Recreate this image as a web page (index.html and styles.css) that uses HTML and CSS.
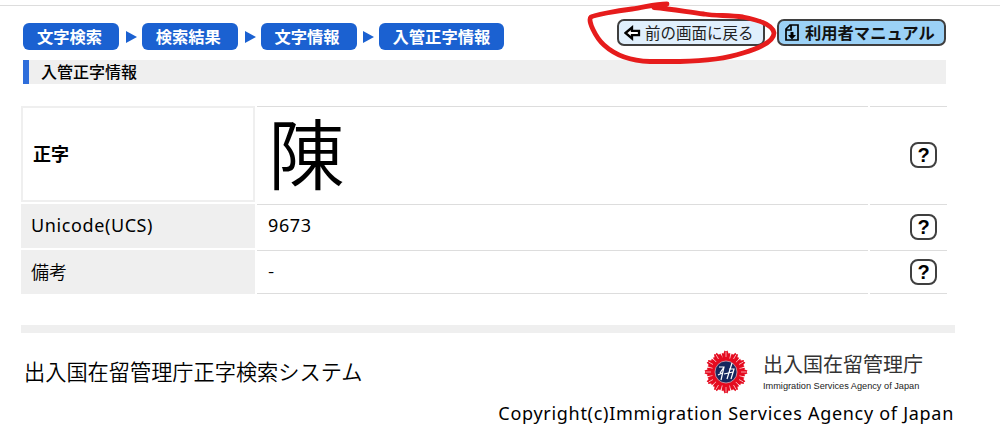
FILE: index.html
```
<!DOCTYPE html>
<html lang="ja">
<head>
<meta charset="utf-8">
<title>入管正字情報</title>
<link rel="stylesheet" href="styles.css">
</head>
<body>
<div class="page">
  <header class="topbar">
    <nav class="crumbs">
      <span class="crumb">文字検索</span><i class="arrow"></i>
      <span class="crumb">検索結果</span><i class="arrow"></i>
      <span class="crumb">文字情報</span><i class="arrow"></i>
      <span class="crumb crumb-wide">入管正字情報</span>
    </nav>
    <div class="actions">
      <span class="button back">
        <svg class="back-icon" width="17" height="16" viewBox="0 0 17 16"><path d="M1.5 8 8 2.500v3.400h7v4.200H8V13.500Z" fill="#fff" stroke="#000" stroke-width="2.300"/></svg>
        <span class="button-text">前の画面に戻る</span>
      </span>
      <span class="button manual">
        <svg class="manual-icon" width="14" height="17" viewBox="0 0 14 17"><path d="M5 1h8v15H1V5ZM6 1v5H1" fill="none" stroke="#000" stroke-width="1.7"/><path d="M5.500 8h3v3h2.500L7 15.500 3 11h2.500Z"/></svg>
        <span class="button-text">利用者マニュアル</span>
      </span>
    </div>
  </header>
  <h1 class="title">入管正字情報</h1>
  <main class="table">
    <div class="label label-main">正字</div><div class="value glyph"><span>陳</span></div><div class="help"><span class="question">?</span></div>
    <div class="label"><span class="latin">Unicode(UCS)</span></div><div class="value"><span class="latin">9673</span></div><div class="help"><span class="question">?</span></div>
    <div class="label">備考</div><div class="value last">-</div><div class="help last"><span class="question">?</span></div>
  </main>
  <footer class="footer">
    <div class="footer-row">
      <div class="system">出入国在留管理庁正字検索システム</div>
      <div class="agency">
        <svg class="emblem" width="44" height="44" viewBox="-22 -22 44 44">
          <defs>
            <g id="ray"><path d="M-4.500-10-4.300-19-2.500-18.500-1.500-21.500 0-20.500 1.500-21.500 2.500-18.500 4.300-19 4.500-10Z" fill="#e50b20"/><path d="M-5-19.500-3.500-13.500M0-20 0-15" stroke="#fff" stroke-width=".6"/></g>
          </defs>
          <circle r="15" fill="#e50b20"/>
          <use href="#ray"/><use href="#ray" transform="rotate(30)"/><use href="#ray" transform="rotate(60)"/><use href="#ray" transform="rotate(90)"/><use href="#ray" transform="rotate(120)"/><use href="#ray" transform="rotate(150)"/><use href="#ray" transform="rotate(180)"/><use href="#ray" transform="rotate(210)"/><use href="#ray" transform="rotate(240)"/><use href="#ray" transform="rotate(270)"/><use href="#ray" transform="rotate(300)"/><use href="#ray" transform="rotate(330)"/>
          <circle r="11" fill="#15275e" stroke="#d9a7b0" stroke-width=".8"/>
          <path d="M-7-5h5L-5 8M-2-5-6 1M-2 2l9-2M6-9 1 7M3-3h5L5 7M-8 3l4-2" fill="none" stroke="#fff" stroke-width="1.2"/>
        </svg>
        <div class="agency-text">
          <div class="agency-ja">出入国在留管理庁</div>
          <div class="agency-en">Immigration Services Agency of Japan</div>
        </div>
      </div>
    </div>
    <div class="copyright">Copyright(c)Immigration Services Agency of Japan</div>
  </footer>
</div>
<svg class="annotation" width="200" height="80" viewBox="580 0 200 80"><path d="M667 4C655 4 646 7 632 9C616 11 594 15 591 17C587 20 596 38 604 45C616 56 632 61 650 61.500H680C705 61 728 58 743 53C757 49 774 42 774 33C773 25 759 20 743 17C727 15 716 16 704 14C687 12 673 9 654 7.500" fill="none" stroke="#e61c1c" stroke-width="4.800" stroke-linecap="round" stroke-linejoin="round"/></svg>
</body>
</html>
```
FILE: styles.css
```
* { box-sizing: border-box; }
body {
  margin: 0;
  background: #fff;
  color: #000;
  font-family: "Noto Sans CJK JP", sans-serif;
}
.page {
  height: 441px;
  padding-top: 5px;
  overflow: hidden;
}
.topbar {
  display: flex;
  justify-content: space-between;
  height: 55px;
  padding: 13px 54px 0 23px;
  border-top: 1px solid #ddd;
}
.crumbs {
  display: flex;
  align-items: center;
  height: 27px;
  margin-top: 4px;
}
.crumb {
  width: 96px;
  height: 27px;
  padding-right: 3px;
  border-radius: 6px;
  background: #1b61d1;
  color: #fff;
  font-size: 16.3px;
  font-weight: 700;
  line-height: 26px;
  text-align: center;
  white-space: nowrap;
}
.crumb-wide { width: 125px; padding-right: 1px; }
.arrow {
  margin: 0 5px 0 6.800px;
  border-left: 11px solid #1b61d1;
  border-top: 6px solid transparent;
  border-bottom: 6px solid transparent;
}
.actions { display: flex; gap: 12px; }
.button {
  display: flex;
  align-items: center;
  height: 27px;
  border: 2px solid #3f3f3f;
  border-radius: 7px;
  white-space: nowrap;
}
.button-text { padding-bottom: 2px; }
.back {
  width: 148px;
  padding-left: 5px;
  gap: 4px;
  background: #e0effc;
  color: #222;
  font-size: 15.5px;
}
.manual {
  width: 169px;
  padding-left: 6px;
  gap: 6px;
  background: #9bd1f6;
  color: #111;
  font-size: 16.300px;
  font-weight: 700;
}
.title {
  width: 923px;
  height: 24px;
  margin: 0 0 22px 23px;
  padding-left: 12px;
  border-left: 6px solid #2f6edb;
  background: #efefef;
  font-size: 16px;
  font-weight: 500;
  line-height: 23px;
}
.table {
  display: grid;
  grid-template-columns: 234px 611px 77px;
  grid-template-rows: 96px 44px 44px;
  gap: 2px;
  margin-left: 21px;
  font-size: 18px;
  font-weight: 350;
}
.label, .value, .help {
  display: flex;
  align-items: center;
}
.label { padding: 0 0 3px 10px; background: #efefef; }
.label-main {
  border: 2px solid #efefef;
  background: #fff;
  font-weight: 700;
}
.value { padding: 0 0 4px 11px; border-top: 1px solid #ddd; }
.help {
  justify-content: flex-end;
  padding-right: 10px;
  border-top: 1px solid #ddd;
}
.last { border-bottom: 1px solid #ddd; }
.glyph {
  padding: 0 0 7px 11px;
  font-size: 77px;
  font-weight: 350;
  line-height: 88px;
}
.latin {
  font-family: "Noto Sans", sans-serif;
  font-weight: 400;
  letter-spacing: 0.600px;
}
.question {
  width: 27px;
  height: 26px;
  border: 2px solid #3f3f3f;
  border-radius: 8px;
  font: bold 20px/22px "Liberation Sans", sans-serif;
  text-align: center;
}
.footer {
  width: 934px;
  margin: 31px 0 0 21px;
  border-top: 8px solid #efefef;
}
.footer-row {
  display: flex;
  justify-content: space-between;
  height: 68px;
  padding: 17px 32px 0 3px;
}
.system {
  padding-top: 5px;
  font-size: 21.200px;
  font-weight: 350;
  line-height: 31px;
}
.agency { display: flex; gap: 15px; }
.agency-text { width: 160px; white-space: nowrap; }
.agency-ja {
  margin-top: 2px;
  color: #333;
  font-size: 20px;
  line-height: 24px;
}
.agency-en {
  margin-top: 4px;
  color: #222;
  font: 9.200px/12px "Liberation Sans", sans-serif;
}
.copyright {
  padding-right: 1px;
  font: 400 18px/24px "Noto Sans", sans-serif;
  letter-spacing: 0.710px;
  text-align: right;
}
.annotation {
  position: absolute;
  top: 0;
  left: 580px;
}
```
